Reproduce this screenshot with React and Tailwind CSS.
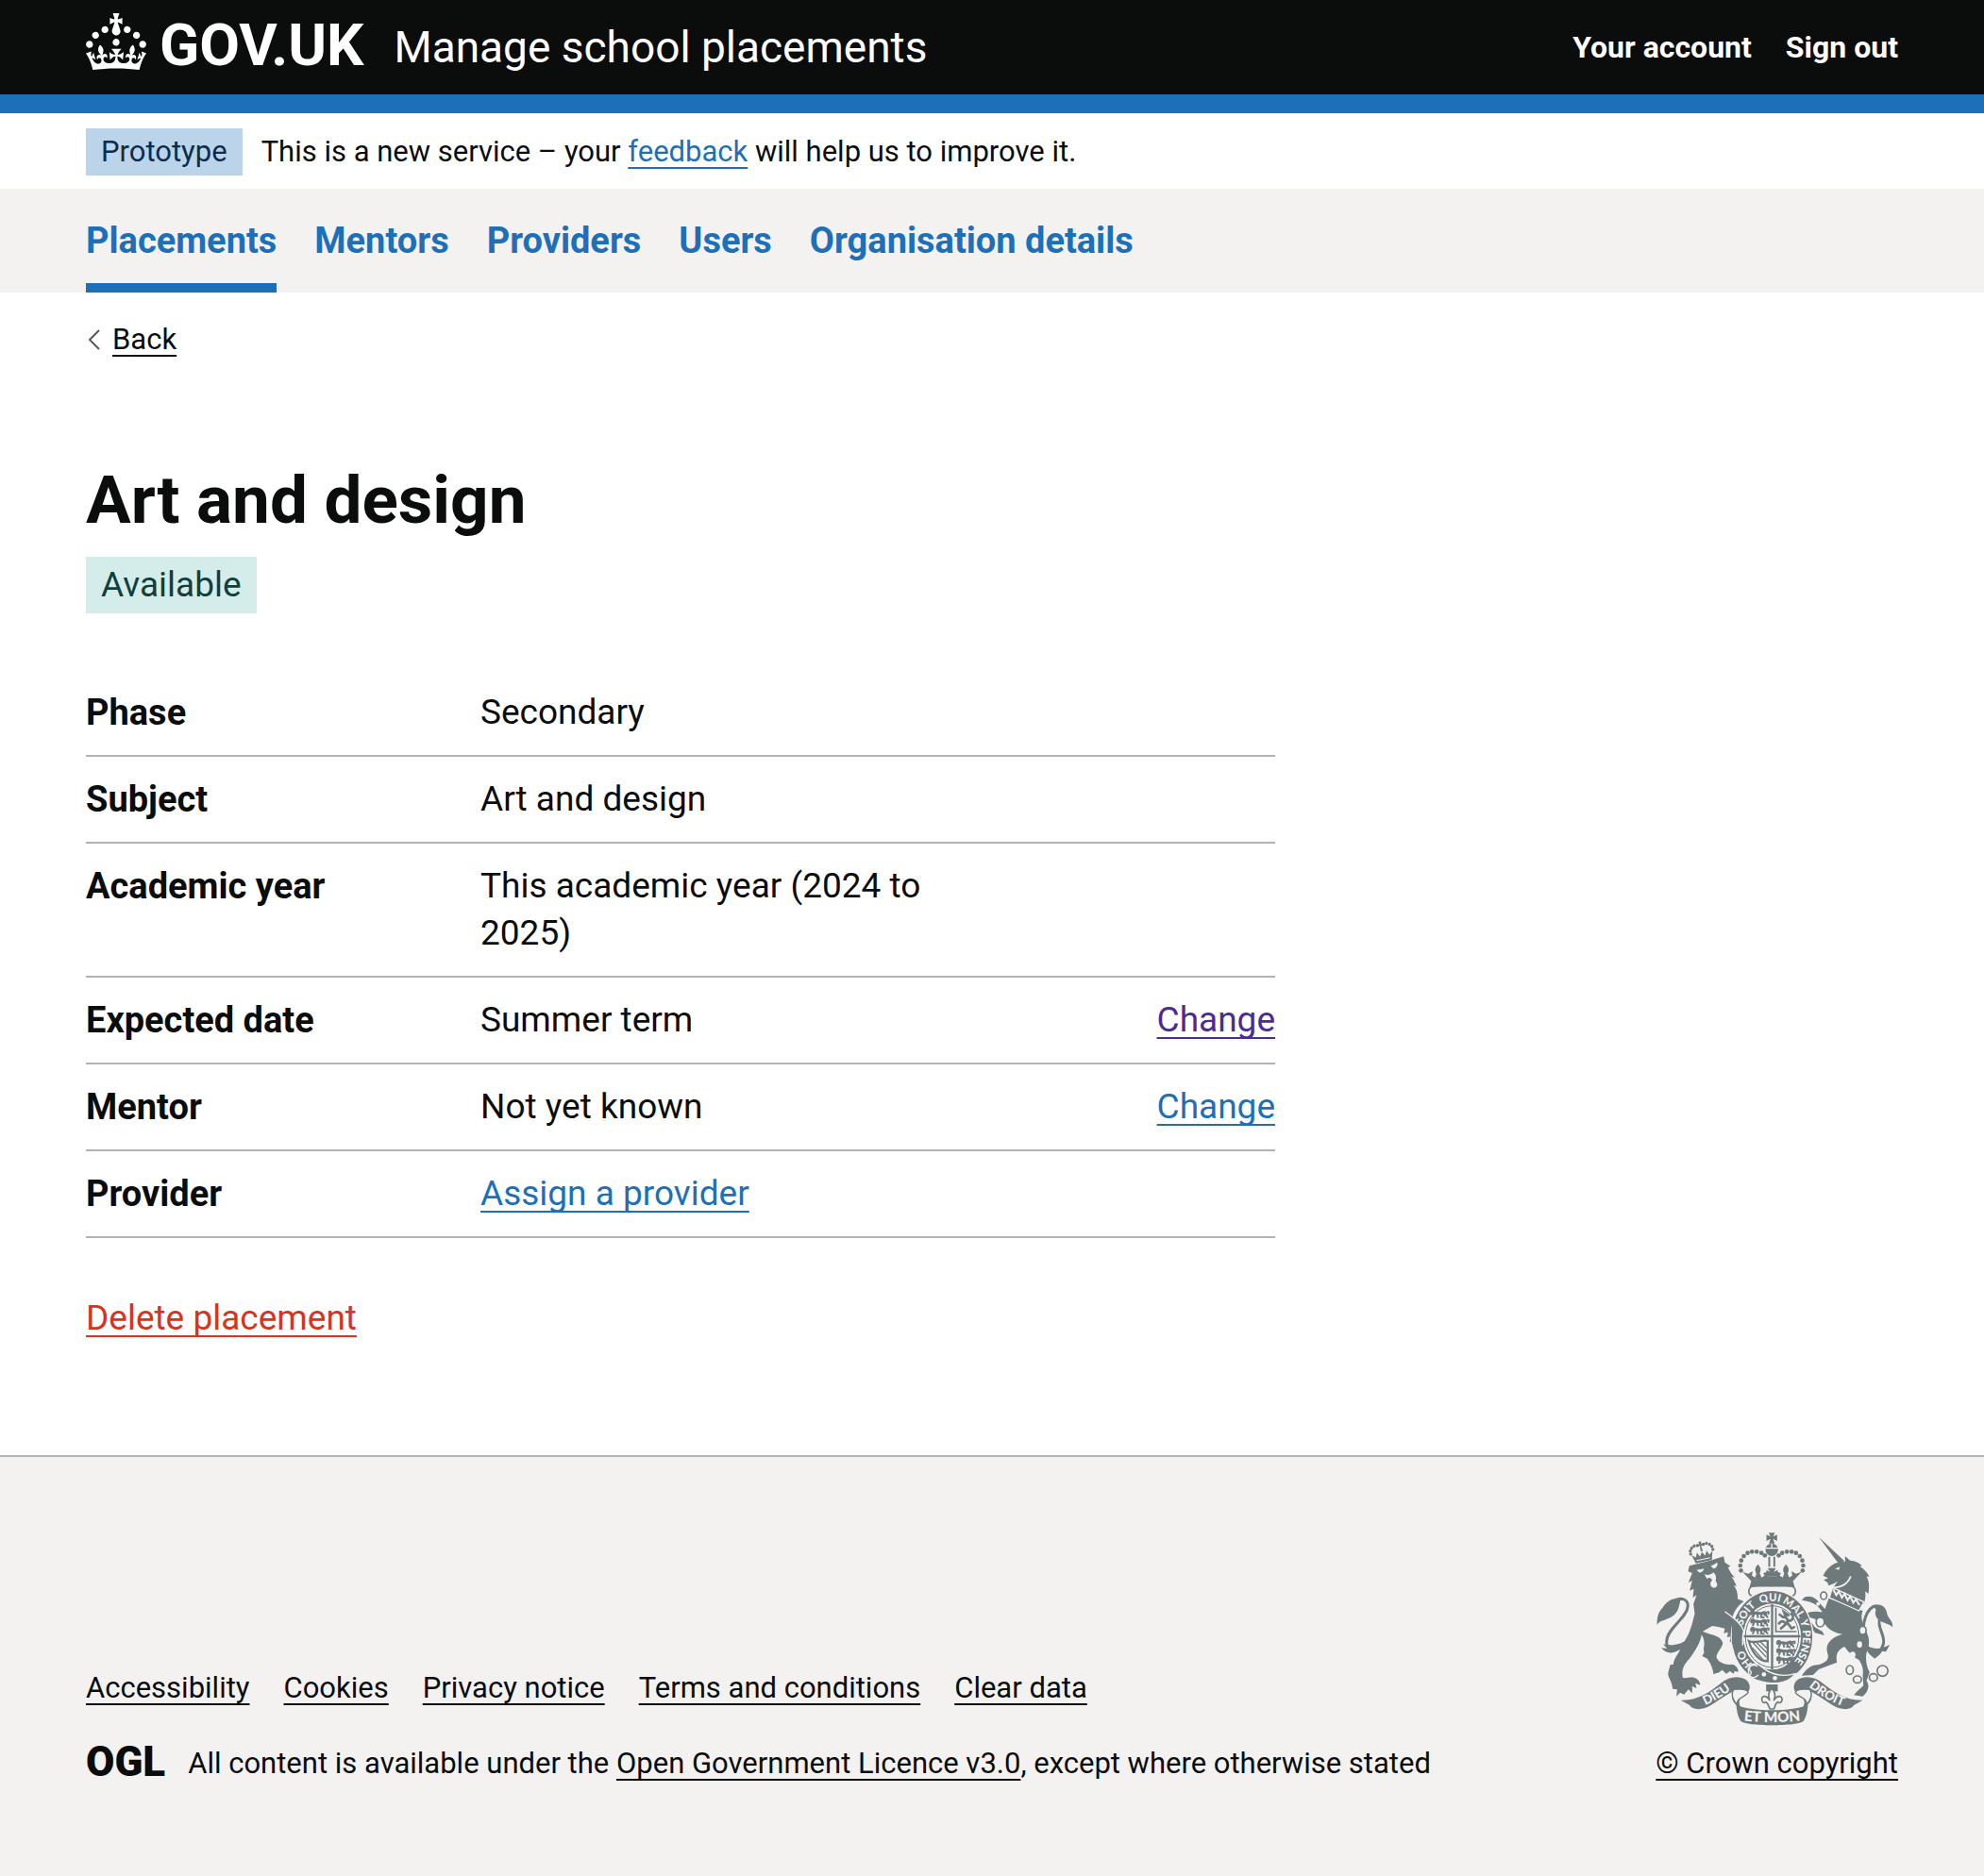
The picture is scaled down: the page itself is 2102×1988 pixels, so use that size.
import React from "react";

const LIGHT = "#f3f2f1";
const GREY = "#6e797c";

function Crown() {
  return (
    <svg aria-hidden="true" viewBox="0 0 32 30" className="h-[60px] w-16 shrink-0" fill="currentColor">
      <path d="M22.6 10.4c-1 .4-2-.1-2.4-1-.4-.9.1-2 1-2.4.9-.4 2 .1 2.4 1s-.1 2-1 2.4m-5.9 6.7c-.9.4-2-.1-2.4-1-.4-.9.1-2 1-2.4.9-.4 2 .1 2.4 1s-.1 2-1 2.4m10.8-3.7c-1 .4-2-.1-2.4-1-.4-.9.1-2 1-2.4.9-.4 2 .1 2.4 1s0 2-1 2.4m3.3 4.8c-1 .4-2-.1-2.4-1-.4-.9.1-2 1-2.4.9-.4 2 .1 2.4 1s-.1 2-1 2.4M17 4.7l2.3 1.2V2.5l-2.3.7-.2-.2.9-3h-3.4l.9 3-.2.2c-.1.1-2.3-.7-2.3-.7v3.4L15 4.7c.1.1.1.2.2.2l-1.3 4c-.1.2-.1.4-.1.6 0 1.1.8 2 1.9 2.2h.7c1-.2 1.9-1.1 1.9-2.1 0-.2 0-.4-.1-.6l-1.3-4c-.1-.2 0-.2.1-.3m-7.6 5.7c.9.4 2-.1 2.4-1 .4-.9-.1-2-1-2.4-.9-.4-2 .1-2.4 1s0 2 1 2.4m-5 3c.9.4 2-.1 2.4-1 .4-.9-.1-2-1-2.4-.9-.4-2 .1-2.4 1s.1 2 1 2.4m-3.2 4.8c.9.4 2-.1 2.4-1 .4-.9-.1-2-1-2.4-.9-.4-2 .1-2.4 1s0 2 1 2.4m14.8 11c4.4 0 8.6.3 12.3.8 1.1-4.5 2.4-7 3.7-8.8l-2.5-.9c.2 1.3.3 1.9 0 2.7-.4-.4-.8-1.1-1.1-2.3l-1.2 4c.7-.5 1.3-.8 2-.9-1.1 2.5-2.6 3.1-3.5 3-1.1-.2-1.7-1.2-1.5-2.1.3-1.2 1.5-1.5 2.1-.1 1.1-2.3-.8-3-2-2.3 1.9-1.9 2.1-3.5.6-5.6-2.1 1.6-2.1 3.2-1.2 5.5-1.2-1.4-3.2-.6-2.5 1.6.9-1.4 2.1-.5 1.9.8-.2 1.1-1.7 2.1-3.5 1.9-2.7-.2-2.9-2.1-2.9-3.6.7-.1 1.9.5 2.9 1.9l.4-4.3c-1.1 1.1-2.1 1.4-3.2 1.4.4-1.2 2.1-3 2.1-3h-5.4s1.7 1.9 2.1 3c-1.1 0-2.1-.2-3.2-1.4l.4 4.3c1-1.4 2.2-2 2.9-1.9-.1 1.5-.2 3.4-2.9 3.6-1.9.2-3.4-.8-3.5-1.9-.2-1.3 1-2.2 1.9-.8.7-2.3-1.2-3-2.5-1.6.9-2.2.9-3.9-1.2-5.5-1.5 2-1.3 3.7.6 5.6-1.2-.7-3.1 0-2 2.3.6-1.4 1.8-1.1 2.1.1.2.9-.3 1.9-1.5 2.1-.9.2-2.4-.5-3.5-3 .6 0 1.2.3 2 .9l-1.2-4c-.3 1.1-.7 1.9-1.1 2.3-.3-.8-.2-1.4 0-2.7l-2.9.9C1.3 23 2.6 25.5 3.7 30c3.7-.5 7.9-.8 12.3-.8" />
    </svg>
  );
}

const PEARLS = [
  [313, 162], [311, 146], [314, 130], [322, 116], [334, 106], [348, 102], [363, 102], [378, 106], [389, 114],
];

const MOTTO = [
  ["HO", "14.5%"],
  ["SOIT", "36%"],
  ["QUI", "49%"],
  ["MAL", "60.5%"],
  ["Y", "69%"],
  ["PENSE", "80%"],
];

function QuarterLions({ x, y }) {
  return (
    <g transform={`translate(${x} ${y})`} fill="none" stroke={GREY} strokeWidth="9" strokeLinecap="round">
      {[0, 26, 52].map((dy) => (
        <g key={dy} transform={`translate(0 ${dy})`}>
          <path d="M6 6 C4 -2 12 -4 14 4 C22 0 30 8 40 3 C48 -2 54 4 48 8" />
          <path d="M14 6 L10 16 M24 7 L26 16 M38 6 L36 16 L44 17 M50 8 L56 16" strokeWidth="6" />
          <path d="M52 3 C60 -6 64 2 58 6" strokeWidth="5" />
        </g>
      ))}
    </g>
  );
}

function RoyalArms() {
  return (
    <svg aria-hidden="true" viewBox="45 38 752 618" className="mr-[5px] h-[206px] w-[251px]" fill={GREY}>
      <defs>
        <path id="garter" d="M412 485 A98 113 0 0 1 412 259 A98 113 0 0 1 412 485" />
        <path id="dieu" d="M184 596 Q242 574 294 530" />
        <path id="droit" d="M522 526 Q576 572 644 596" />
        <path id="etmon" d="M312 638 Q412 650 512 638" />
      </defs>

      {/* lion */}
      <path d="M145 165 L149 147 L215 130 L258 117 L262 136 C270 142 274 145 279 147 L272 153 C278 166 284 176 294 184 L283 182 C292 194 296 203 299 213 L290 208 C300 222 304 238 302 252 L322 260 C300 276 288 296 284 320 L300 336 L300 392 L288 384 L277 390 L280 372 L269 374 L272 358 L258 361 L262 346 L244 342 L222 338 C208 346 200 350 192 356 C212 366 244 366 254 388 C260 402 238 418 235 436 C238 452 262 464 284 460 C296 462 306 472 304 484 L292 482 L290 490 L278 482 L266 490 L254 478 C246 482 240 490 234 488 L226 492 C224 476 218 458 206 442 L190 434 L196 422 C192 408 198 398 196 392 C196 380 192 374 188 366 C184 392 166 420 148 444 C130 462 124 480 128 502 C136 506 150 500 164 502 C176 506 184 516 183 526 L168 520 L172 536 L158 530 L158 552 L146 540 L132 556 L120 550 L108 562 L110 540 L96 538 C94 520 88 510 82 496 C80 482 86 476 88 462 L98 460 C100 440 116 424 126 402 C132 388 140 376 146 364 C158 338 160 320 166 300 L162 268 L172 240 L160 248 L163 220 L150 226 L158 194 L146 200 L158 170 Z" />
      <path d="M134 398 C100 426 74 416 77 384 C80 344 142 312 144 276 C146 254 124 246 104 256" fill="none" stroke={GREY} strokeWidth="9" />
      <path d="M122 252 C92 246 76 262 64 280 C52 292 46 306 46 334 C56 320 66 322 76 316 C94 312 112 298 116 276 Z" />
      <path d="M134 386 C110 402 84 400 66 396 L78 410 L60 408 C76 430 104 428 128 404 Z" />
      <g fill={LIGHT}>
        <path d="M172 160 L196 156 C194 164 186 170 180 168 Z" />
        <path d="M217 148 L238 136 C240 146 234 154 226 156 Z" />
        <path d="M197 172 Q210 182 226 168 Q238 180 232 194 Q242 208 234 214 Q226 220 218 212 Q212 202 222 192 L214 184 L204 188 Z" />
      </g>
      {/* lion's crown */}
      <g transform="rotate(-12 190 110)">
        <path d="M164 134 L156 106 L168 116 L174 102 L182 116 L190 102 L198 116 L206 102 L212 116 L224 106 L216 134 Z" />
        <path d="M168 126 L212 126" stroke={LIGHT} strokeWidth="3" />
        {[[154, 102], [155, 92], [161, 84], [170, 79], [180, 80], [200, 80], [210, 79], [219, 84], [225, 92], [226, 102]].map(([cx, cy]) => (
          <circle key={cx} cx={cx} cy={cy} r="5" />
        ))}
        <path d="M187 100 L188 82 L181 84 L181 76 L187 77 L186 69 L195 69 L193 77 L200 76 L200 84 L192 82 L194 100 Z" />
      </g>

      {/* unicorn */}
      <path d="M561 56 L642 132 L626 144 Z" />
      <path d="M644 116 L660 130 C682 132 692 140 698 148 L690 148 C706 158 716 170 721 182 L712 180 C720 196 722 210 718 236 L708 228 C710 244 708 254 704 268 L598 232 C606 214 614 206 620 196 C606 206 598 206 592 210 L588 200 L576 192 L590 186 L574 178 C584 158 600 144 616 138 L644 134 Z" />
      <path d="M604 216 C630 216 652 206 662 180" fill="none" stroke={LIGHT} strokeWidth="5" />
      <path d="M612 156 L628 150 L624 160 Z" fill={LIGHT} />
      <path d="M592 250 L700 290 C690 316 704 336 714 362 C724 384 720 406 712 424 C708 446 712 466 722 486 L712 512 C724 530 716 548 700 562 L672 558 C680 546 694 536 702 528 L700 494 C704 474 696 458 688 446 C668 436 654 420 642 404 C626 412 612 422 618 454 L560 476 L542 494 L506 496 C520 476 536 462 556 462 C580 456 596 446 588 424 C580 396 596 376 636 364 C612 360 592 350 582 334 C562 322 540 310 524 310 L548 342 L572 356 L578 368 L548 360 L512 304 C530 288 556 292 572 294 L556 274 C540 262 524 258 506 256 L516 246 C540 240 552 252 560 262 L580 284 Z" />
      <path d="M604 216 L704 262 L688 290 L594 248 Z" stroke={LIGHT} strokeWidth="4" />
      <path d="M606 222 L616 240 L624 228 L634 248 L642 236 L652 256 L660 244 L670 264 L678 254 L690 272" fill="none" stroke={LIGHT} strokeWidth="6" />
      <path d="M712 404 C690 352 706 292 734 276 C758 272 768 290 756 310 C742 340 772 366 766 394 C760 418 748 424 732 428" fill="none" stroke={GREY} strokeWidth="9" />
      <path d="M732 274 C764 262 776 284 778 302 C784 318 796 320 795 342 C784 330 766 330 752 320 C740 310 738 298 742 286 Z" />
      <path d="M708 396 C730 416 760 412 786 398 L774 420 L762 418 C752 434 744 436 738 442 C722 430 710 418 708 396 Z" />
      <g fill="none" stroke={GREY} strokeWidth="5">
        <ellipse cx="576" cy="242" rx="10" ry="12" />
        <ellipse cx="565" cy="326" rx="13" ry="15" fill={LIGHT} />
        <ellipse cx="700" cy="352" rx="11" ry="13" fill={LIGHT} />
        <ellipse cx="659" cy="478" rx="11" ry="14" />
        <ellipse cx="683" cy="508" rx="13" ry="11" />
        <ellipse cx="734" cy="502" rx="13" ry="12" />
        <circle cx="763" cy="481" r="17" />
      </g>
      <g fill={LIGHT}>
        <ellipse cx="690" cy="397" rx="8" ry="10" />
        <ellipse cx="668" cy="430" rx="9" ry="10" />
        <circle cx="558" cy="268" r="6" />
      </g>

      {/* crown cushion */}
      <rect x="338" y="211" width="148" height="34" rx="16" fill={LIGHT} stroke={GREY} strokeWidth="5" />

      {/* garter and shield */}
      <ellipse cx="412" cy="373" rx="132" ry="150" fill={LIGHT} />
      <ellipse cx="412" cy="373" rx="128" ry="146" />
      <ellipse cx="412" cy="372" rx="92" ry="105" fill={LIGHT} />
      <ellipse cx="412" cy="372" rx="85" ry="98" fill="none" stroke={GREY} strokeWidth="3" />
      <path d="M412 268 V476 M322 371 H502" stroke={GREY} strokeWidth="7" />
      <QuarterLions x={341} y={294} />
      <QuarterLions x={424} y={388} />
      <g fill="none" stroke={GREY} strokeLinecap="round">
        <path d="M424 282 V356 H488" strokeWidth="5" />
        <path d="M440 346 L456 332 C448 320 440 322 434 330 M456 332 C466 322 460 308 446 310 L436 302 M456 310 L450 294 L464 304 M462 330 L474 346 L482 342 M464 322 C480 322 482 308 474 298" strokeWidth="8" />
        <path d="M338 386 C360 396 380 380 398 386 V450 C376 452 350 430 338 386 Z" strokeWidth="7" />
        <path d="M352 392 L392 436 M364 392 L394 422 M376 390 L394 408 M350 408 L382 444" strokeWidth="4" />
      </g>
      <g fontFamily='Lato, "Liberation Sans", sans-serif' fontWeight="900" fill={LIGHT} textAnchor="middle">
        {MOTTO.map(([word, at]) => (
          <text key={word} fontSize="34">
            <textPath href="#garter" startOffset={at}>{word}</textPath>
          </text>
        ))}
      </g>
      {/* lion's foreleg over the garter */}
      <path d="M262 292 C290 314 312 328 322 354 C316 370 320 386 318 400 L308 392 L302 404 L294 392 L284 396 L284 340 Z" />
      <path d="M262 292 C290 314 312 328 322 354 C316 370 320 386 318 400" fill="none" stroke={LIGHT} strokeWidth="4" />
      {/* buckle and strap */}
      <path d="M336 476 C340 458 362 452 376 466 C410 496 448 500 486 490 C470 512 440 522 408 520 C380 518 356 508 340 502 Z" stroke={LIGHT} strokeWidth="4" />
      <path d="M366 466 C346 456 336 470 342 480 C348 484 346 492 340 496 C350 508 362 500 368 494" fill="none" stroke={LIGHT} strokeWidth="4" />
      <circle cx="386" cy="492" r="7" fill={LIGHT} />
      <circle cx="421" cy="504" r="7" fill={LIGHT} />

      {/* crown */}
      <path d="M340 216 L346 194 Q412 180 478 194 L484 216 Q412 204 340 216 Z" />
      <path d="M345 195 L318 166 L336 172 L350 164 L348 178 L358 184 L362 172 L374 172 L378 184 L388 178 L384 170 L396 166 L396 180 H428 L428 166 L440 170 L436 178 L446 184 L450 172 L462 172 L466 184 L476 178 L474 164 L488 172 L506 166 L479 195 Q412 182 345 195 Z" />
      <path d="M367 142 C378 154 378 160 370 176 H364 C356 160 356 154 367 142 Z M456 142 C467 154 467 160 459 176 H453 C445 160 445 154 456 142 Z" />
      <path d="M398 154 H424 L417 166 L430 160 V180 H394 V160 L405 166 Z" />
      {PEARLS.map(([cx, cy]) => (
        <React.Fragment key={cy * 1000 + cx}>
          <circle cx={cx} cy={cy} r="7" />
          <circle cx={822 - cx} cy={cy} r="7" />
        </React.Fragment>
      ))}
      <path d="M403 118 V150 M419 118 V150" stroke={GREY} strokeWidth="6" />
      <circle cx="411" cy="96" r="20" />
      <path d="M390 91 H432 M411 74 V92" stroke={LIGHT} strokeWidth="4" />
      <path d="M401 42 H421 L415 54 L428 48 V68 L415 61 L420 76 H402 L407 61 L394 68 V48 L407 54 Z" />

      {/* ribbon */}
      <path d="M122 574 C176 576 214 548 252 518 C276 498 308 496 328 508 C348 524 344 548 322 560 C306 570 304 582 312 596 L298 590 C280 572 282 558 292 544 C260 558 222 592 196 600 C172 606 156 600 150 590 Z" />
      <path d="M700 574 C646 576 608 548 570 518 C546 498 514 496 494 508 C474 524 478 548 500 560 C516 570 518 582 510 596 L524 590 C542 572 540 558 530 544 C562 558 600 592 626 600 C650 606 666 600 672 590 Z" />
      <path d="M290 540 C312 538 334 540 336 550 C326 566 300 564 300 588 C282 566 282 552 290 540 Z M532 540 C510 538 488 540 486 550 C496 566 522 564 522 588 C540 566 540 552 532 540 Z" fill={LIGHT} stroke={GREY} strokeWidth="4" />
      <path d="M298 588 C340 612 482 612 526 588 C524 612 520 628 512 640 C496 658 328 658 312 640 C304 628 300 612 298 588 Z" />
      <g fontFamily='Lato, "Liberation Sans", sans-serif' fontWeight="900" fill={LIGHT} textAnchor="middle">
        <text fontSize="40"><textPath href="#dieu" startOffset="50%">DIEU</textPath></text>
        <text fontSize="40"><textPath href="#droit" startOffset="50%">DROIT</textPath></text>
        <text fontSize="46"><textPath href="#etmon" startOffset="50%">ET MON</textPath></text>
      </g>

      {/* fleur-de-lis */}
      <path d="M393 524 H430 V546 H393 Z" />
      <path d="M411 536 C422 548 424 560 418 574 C426 560 442 556 444 572 C442 584 434 584 430 580 L424 586 L418 602 H405 L398 586 L392 580 C386 584 380 582 379 572 C380 556 396 560 404 574 C398 560 400 548 411 536 Z" fill={LIGHT} stroke={GREY} strokeWidth="5" strokeLinejoin="round" />
    </svg>
  );
}

const linkBase = "underline decoration-2 underline-offset-6 [text-decoration-skip-ink:none]";

const navItems = ["Placements", "Mentors", "Providers", "Users", "Organisation details"];

const rows = [
  { key: "Phase", value: "Secondary" },
  { key: "Subject", value: "Art and design" },
  { key: "Academic year", value: "This academic year (2024 to 2025)" },
  { key: "Expected date", value: "Summer term", action: "text-[#4c2c92]" },
  { key: "Mentor", value: "Not yet known", action: "text-[#1d70b8]" },
  { key: "Provider", link: "Assign a provider" },
];

const footerLinks = ["Accessibility", "Cookies", "Privacy notice", "Terms and conditions", "Clear data"];

function Container({ children, className = "" }) {
  return (
    <div className="px-[91px]">
      <div className={`mx-auto max-w-[1920px] ${className}`}>{children}</div>
    </div>
  );
}

export default function App() {
  return (
    <div className="flex min-h-screen flex-col bg-white font-[Roboto,'Liberation_Sans',sans-serif] text-[37px] leading-[50px] text-[#0b0c0c]">
      <header className="border-b-20 border-[#1d70b8] bg-[#0b0c0c] text-white">
        <Container className="flex h-[100px] items-center justify-between">
          <div className="flex items-center gap-8">
            <a href="#home" className="flex items-center gap-[14px] pb-3">
              <Crown />
              <span className="pt-2 text-[62px] leading-[60px] font-bold">GOV.UK</span>
            </a>
            <a href="#service" className="text-[46px]">Manage school placements</a>
          </div>
          <nav aria-label="Account" className="flex gap-9 text-[32px] leading-10 font-bold">
            <a href="#account">Your account</a>
            <a href="#sign-out">Sign out</a>
          </nav>
        </Container>
      </header>

      <Container className="flex h-20 items-center gap-5 pt-0.5 text-[31px] leading-10">
        <strong className="bg-[#bbd4ea] px-4 py-[5px] font-normal text-[#0c2d4a]">Prototype</strong>
        <p>
          This is a new service – your{" "}
          <a href="#feedback" className={`${linkBase} text-[#1d70b8]`}>feedback</a> will help us to improve it.
        </p>
      </Container>

      <nav aria-label="Primary" className="bg-[#f3f2f1]">
        <Container className="flex h-[110px] gap-10">
          {navItems.map((item, i) => (
            <a
              key={item}
              href="#nav"
              aria-current={i === 0 ? "page" : undefined}
              className={`flex items-center border-b-10 pt-[10px] text-[38px] font-bold text-[#1d70b8] ${i === 0 ? "border-[#1d70b8]" : "border-transparent"}`}
            >
              {item}
            </a>
          ))}
        </Container>
      </nav>

      <Container className="flex pt-[30px] text-[31px] leading-10">
        <a href="#back" className="flex items-center gap-3">
          <svg aria-hidden="true" viewBox="0 0 16 24" className="h-6 w-4" fill="none" stroke="#505a5f" strokeWidth="2">
            <path d="M14 2 L4 12 L14 22" />
          </svg>
          <span className={linkBase}>Back</span>
        </a>
      </Container>

      <main className="grow">
        <Container className="pt-[110px] pb-[120px]">
          <h1 className="text-[71px] leading-[80px] font-bold">Art and design</h1>
          <strong className="mt-5 inline-block bg-[#d4ecea] px-4 py-[5px] align-top font-normal text-[#10403c]">Available</strong>
          <dl className="mt-[60px] w-[calc(66.667%-20px)]">
            {rows.map((row) => (
              <div key={row.key} className="grid grid-cols-[418fr_502fr_340fr] border-b-2 border-[#b1b4b6] py-5">
                <dt className="text-[38px] font-bold">{row.key}</dt>
                <dd>
                  {row.link ? <a href="#assign" className={`${linkBase} text-[#1d70b8]`}>{row.link}</a> : row.value}
                </dd>
                {row.action && (
                  <dd className="text-right">
                    <a href="#change" aria-label={`Change ${row.key}`} className={`${linkBase} ${row.action}`}>Change</a>
                  </dd>
                )}
              </div>
            ))}
          </dl>
          <a href="#delete" className={`${linkBase} mt-[60px] inline-block align-top text-[#d4351c]`}>Delete placement</a>
        </Container>
      </main>

      <footer className="border-t-2 border-[#b1b4b6] bg-[#f3f2f1] text-[31px] leading-10">
        <Container className="flex items-end justify-between pt-[79px] pb-[99px]">
          <div>
            <ul className="flex gap-9">
              {footerLinks.map((label) => (
                <li key={label}>
                  <a href="#footer" className={linkBase}>{label}</a>
                </li>
              ))}
            </ul>
            <div className="mt-10 flex items-center gap-6">
              <span className="pb-1 text-[44px] leading-9 font-black">OGL</span>
              <p>
                All content is available under the{" "}
                <a href="#licence" className={linkBase}>Open Government Licence v3.0</a>, except where otherwise stated
              </p>
            </div>
          </div>
          <a href="#copyright" className="flex flex-col items-end gap-5">
            <RoyalArms />
            <span className={linkBase}>© Crown copyright</span>
          </a>
        </Container>
      </footer>
    </div>
  );
}
